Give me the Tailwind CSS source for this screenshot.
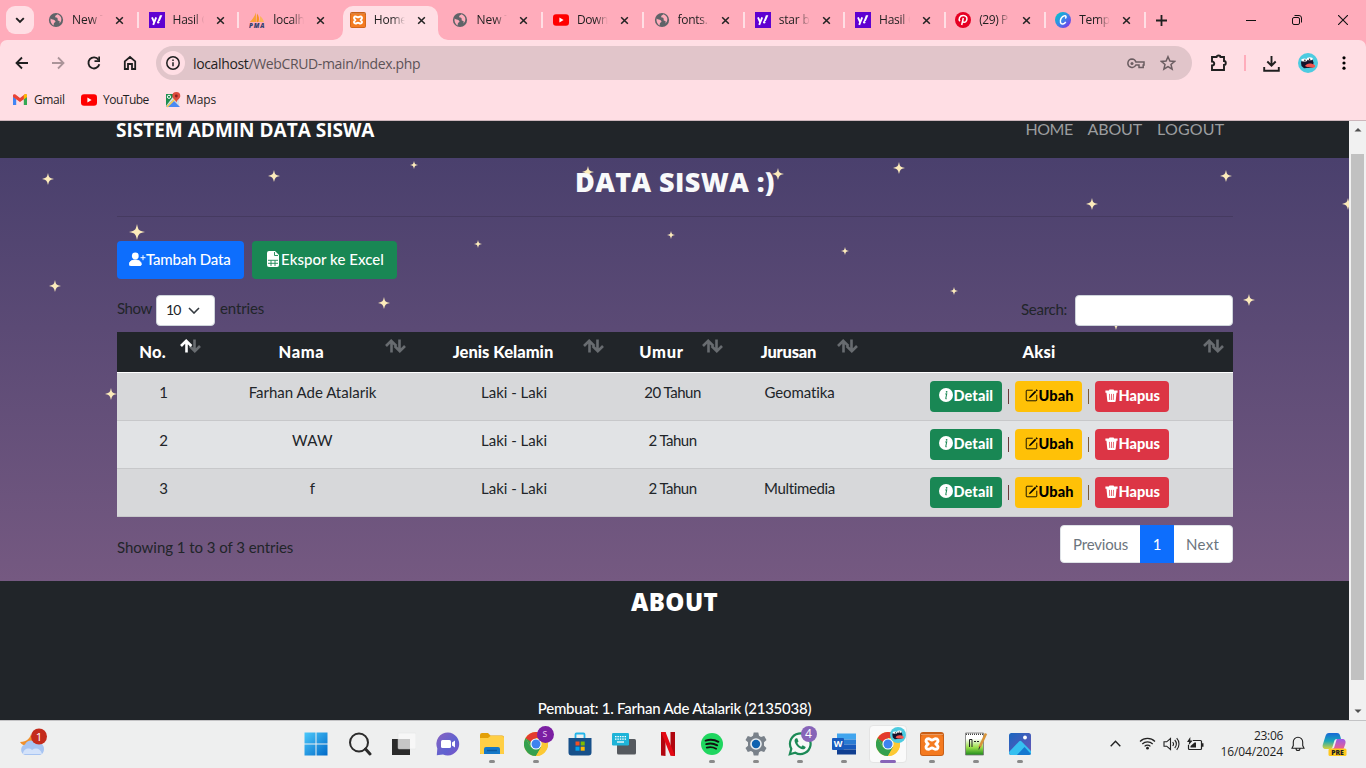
<!DOCTYPE html>
<html lang="id">
<head>
<meta charset="utf-8">
<title>Home</title>
<script src="https://cdn.jsdelivr.net/npm/@tailwindcss/browser@4"></script>
</head>
<body class="w-[1366px] h-[768px] overflow-hidden flex flex-col bg-[#ffdee4] font-['Open_Sans','Noto_Sans',sans-serif] text-[12px] text-[#1f1f1f]">

<!-- shared icon symbols -->
<svg class="hidden">
  <symbol id="x" viewBox="0 0 10 10"><path d="M1.3 1.3l7.4 7.4M8.7 1.3L1.3 8.7" stroke="#222" stroke-width="1.7" fill="none"/></symbol>
  <symbol id="globe" viewBox="0 0 16 16"><circle cx="8" cy="8" r="7.1" fill="#5f6368"/><path d="M2.6 6.6c1.5 1.6 3 .6 4 1.6s1.400 1.500 0 2.200-.4 2.500-1.200 3C3.500 12.300 2 9.500 2.600 6.600zM9.500 2.200C8 3.200 7 3.500 7.200 4.800s2 .5 2.400 1.600-.6 2 1 2.300 1.400 1.600.5 2.700c2-1 3.300-4.700 1.200-7.200-.9-1-1.800-1.600-2.800-2z" fill="#ffacbb"/></symbol>
  <symbol id="yahoo" viewBox="0 0 16 16"><path d="M0 0h16v16H0z" fill="#5f01d1"/><path d="M3 5.300l2.200 5 2-5M5.300 10.200l-1.100 2.600" stroke="#fff" stroke-width="1.900" fill="none"/><path d="M10.900 3.200h2.400L10.800 9H8.700z" fill="#fff"/><circle cx="9.200" cy="10.300" r="1.200" fill="#fff"/></symbol>
  <symbol id="pma" viewBox="0 0 16 16"><path d="M7 .5v9.500H.8C3 8 5.500 4.500 7 .5z" fill="#f9a13a"/><path d="M8 1.500C10 4 10.500 7 9.500 10H7.500z" fill="#f7931e"/><path d="M11 4c2 1.500 3.500 4 4 6h-5c1-2 1.200-4 1-6z" fill="#fbb45c"/><text x="0" y="15.700" font-size="6.200" font-weight="800" font-style="italic" font-family="Open Sans" fill="#33406e" textLength="15.500">PMA</text></symbol>
  <symbol id="xampp" viewBox="0 0 24 24"><rect width="24" height="24" rx="3" fill="#c85f17"/><rect x="1" y="3" width="22" height="20" rx="2" fill="#f47a20"/><path d="M1 2.500h22" stroke="#e99a62"/><path d="M8.300 6.700c-2.300 0-2.800 2.300-1.800 3.500L8 12l-1.500 1.800c-1 1.200-.5 3.500 1.800 3.500 1.700 0 2.200-1.300 3.700-1.300s2 1.300 3.700 1.300c2.300 0 2.800-2.300 1.800-3.500L16 12l1.500-1.800c1-1.200.5-3.500-1.800-3.500C14 6.700 13.500 8 12 8s-2-1.300-3.700-1.300z" fill="none" stroke="#fff" stroke-width="2.900"/></symbol>
  <symbol id="yt" viewBox="0 0 16 16"><rect y="2.200" width="16" height="11.600" rx="3" fill="#f00"/><path d="M6.400 5.600v4.800L10.600 8z" fill="#fff"/></symbol>
  <symbol id="chrome" viewBox="0 0 24 24"><circle cx="12" cy="12" r="12" fill="#fcc934"/><path d="M1.600 6A12 12 0 0 0 12 24l5.200-9L6.800 15z" fill="#34a04f"/><path d="M1.600 6L6.800 15 12 12V6z" fill="#34a04f"/><path d="M1.600 6A12 12 0 0 1 22.400 6H12L7 10z" fill="#e33b2e"/><path d="M22.400 6A12 12 0 0 1 12 24l5.200-9L18 9l-3-3z" fill="#fcc934"/><circle cx="12" cy="12" r="5.600" fill="#fff"/><circle cx="12" cy="12" r="4.500" fill="#3f83ee"/></symbol>
  <symbol id="avatar" viewBox="0 0 20 20"><circle cx="10" cy="10" r="10" fill="#4dcbe0"/><path d="M3 9.500L4 7l10-2 1.500 4.500-.5 5-9 .8-2.500-2.300z" fill="#15132b"/><ellipse cx="6.300" cy="7" rx="3" ry="1.500" fill="#fff"/><ellipse cx="11.800" cy="5.800" rx="3" ry="1.500" fill="#fff"/><circle cx="6.900" cy="7.300" r=".8" fill="#111"/><circle cx="11.600" cy="6.300" r=".8" fill="#111"/><path d="M7 13c1.500-3 6.500-3.500 10-.8.700 2.300-1.500 2.800-3.500 2.200-2.500-.5-4.500.3-6.500-1.400z" fill="#f4544f"/></symbol>
  <symbol id="star4" viewBox="-8 -8 16 16"><path d="M0-8Q1-2.500 2.300-2.100 3-1 8 0 3 1 2.200 2.200 1 3 0 8-1 3-2.200 2.200-3 1-8 0-3-1-2.200-2.200-1-3 0-8z" fill="#fdecbb"/></symbol>
  <symbol id="sort" viewBox="0 0 21 14"><path d="M6.500 13.500V2M1 7l5.200-5.200L11.400 7" stroke="currentColor" stroke-width="2.600" fill="none"/></symbol>
  <symbol id="sortdn" viewBox="0 0 21 14"><path d="M14.500.500V12M9.600 7l5.200 5.200L20 7" stroke="#686c70" stroke-width="2.600" fill="none"/></symbol>
  <symbol id="info" viewBox="0 0 16 16"><circle cx="8" cy="8" r="8" fill="#fff"/><path d="M7.100 6.900l1.700-.2-1 5c-.1.700.3.800 1 .4" fill="none" stroke="#198754" stroke-width="1.200"/><circle cx="8.700" cy="4.300" r="1" fill="#198754"/></symbol>
  <symbol id="edit" viewBox="0 0 16 16"><path d="M9.500 1.500h-7a1 1 0 0 0-1 1v11a1 1 0 0 0 1 1h11a1 1 0 0 0 1-1V7" fill="none" stroke="#000" stroke-width="1.100"/><path d="M14.300.3l1.500 1.500-1.200 1.300L13 1.500zM12.300 2.200l1.600 1.600-6.800 6.800-2.300.8.800-2.300z" fill="#000"/></symbol>
  <symbol id="trash" viewBox="0 0 16 16"><path d="M5.500.5h5l.7 1.200H15.500V4.500H.5V1.700h4.300zM1.800 4.500h12.400l-1 10a1.500 1.500 0 0 1-1.500 1.500H4.300a1.500 1.500 0 0 1-1.500-1.500z" fill="#fff"/><path d="M5.500 6l.3 7.500M8 6v7.500M10.500 6l-.3 7.500" stroke="#dc3545" stroke-width=".9" fill="none"/></symbol>
</svg>

<!-- tab strip -->
<header class="relative h-[40px] shrink-0 bg-[#ffacbb] flex items-center">
  <div class="ml-[6px] w-[28px] h-[28px] rounded-[9px] bg-[#ffdee4] flex items-center justify-center"><svg class="w-[10px] h-[7px]" viewBox="0 0 10 7"><path d="M1.200 1.200L5 5l3.800-3.800" fill="none" stroke="#1f1f1f" stroke-width="1.900"/></svg></div>
  <nav class="flex ml-[4px] h-full">
    <div class="w-[100.600px] flex items-center pl-[10px] relative"><svg class="size-[16px]"><use href="#globe"/></svg><span class="ml-[8px] w-[31px] overflow-hidden whitespace-nowrap mask-r-from-60%">New T</span><svg class="ml-[12px] size-[9px]"><use href="#x"/></svg><i class="absolute right-0 top-[12px] w-[2px] h-[16px] bg-[#ffdee4]"></i></div>
    <div class="w-[100.600px] flex items-center pl-[10px] relative"><svg class="size-[16px]"><use href="#yahoo"/></svg><span class="ml-[8px] w-[31px] overflow-hidden whitespace-nowrap tracking-[-.26px] mask-r-from-70%">Hasil C</span><svg class="ml-[12px] size-[9px]"><use href="#x"/></svg><i class="absolute right-0 top-[12px] w-[2px] h-[16px] bg-[#ffdee4]"></i></div>
    <div class="w-[100.600px] flex items-center pl-[10px] relative"><svg class="size-[16px]"><use href="#pma"/></svg><span class="ml-[8px] w-[31px] overflow-hidden whitespace-nowrap tracking-[-.26px] mask-r-from-60%">localh</span><svg class="ml-[12px] size-[9px]"><use href="#x"/></svg></div>
    <div class="w-[102.600px] flex items-center pl-[10px] relative">
      <svg class="absolute left-[-7px] top-[6px] w-[115px] h-[34px]" viewBox="0 0 115 34"><path d="M0 34a10 10 0 0 0 10-10V10A10 10 0 0 1 20 0H95a10 10 0 0 1 10 10V24a10 10 0 0 0 10 10z" fill="#ffdee4"/></svg>
      <svg class="relative size-[16px]"><use href="#xampp"/></svg><span class="relative ml-[8px] w-[31px] overflow-hidden whitespace-nowrap tracking-[-.23px] mask-r-from-60%">Home</span><svg class="relative ml-[12px] size-[9px]"><use href="#x"/></svg></div>
    <div class="w-[100.600px] flex items-center pl-[10px] relative"><svg class="size-[16px]"><use href="#globe"/></svg><span class="ml-[8px] w-[31px] overflow-hidden whitespace-nowrap mask-r-from-60%">New T</span><svg class="ml-[12px] size-[9px]"><use href="#x"/></svg><i class="absolute right-0 top-[12px] w-[2px] h-[16px] bg-[#ffdee4]"></i></div>
    <div class="w-[100.600px] flex items-center pl-[10px] relative"><svg class="size-[16px]"><use href="#yt"/></svg><span class="ml-[8px] w-[31px] overflow-hidden whitespace-nowrap tracking-[-.4px] mask-r-from-60%">Down</span><svg class="ml-[12px] size-[9px]"><use href="#x"/></svg><i class="absolute right-0 top-[12px] w-[2px] h-[16px] bg-[#ffdee4]"></i></div>
    <div class="w-[101.200px] flex items-center pl-[10px] relative"><svg class="size-[16px]"><use href="#globe"/></svg><span class="ml-[8px] w-[31px] overflow-hidden whitespace-nowrap tracking-[-.3px] mask-r-from-70%">fonts.</span><svg class="ml-[12px] size-[9px]"><use href="#x"/></svg><i class="absolute right-0 top-[12px] w-[2px] h-[16px] bg-[#ffdee4]"></i></div>
    <div class="w-[100.300px] flex items-center pl-[10px] relative"><svg class="size-[16px]"><use href="#yahoo"/></svg><span class="ml-[8px] w-[31px] overflow-hidden whitespace-nowrap tracking-[-.2px] mask-r-from-60%">star b</span><svg class="ml-[12px] size-[9px]"><use href="#x"/></svg><i class="absolute right-0 top-[12px] w-[2px] h-[16px] bg-[#ffdee4]"></i></div>
    <div class="w-[100.600px] flex items-center pl-[10px] relative"><svg class="size-[16px]"><use href="#yahoo"/></svg><span class="ml-[8px] w-[31px] overflow-hidden whitespace-nowrap tracking-[-.26px] mask-r-from-70%">Hasil C</span><svg class="ml-[12px] size-[9px]"><use href="#x"/></svg><i class="absolute right-0 top-[12px] w-[2px] h-[16px] bg-[#ffdee4]"></i></div>
    <div class="w-[100px] flex items-center pl-[9.500px] relative"><svg class="size-[16px]" viewBox="0 0 16 16"><circle cx="8" cy="8" r="8" fill="#e60023"/><path d="M4.900 9.300C3.200 7 4.600 3.500 8.200 3.500c3 0 4 2 3.700 3.900-.3 2.100-1.700 3.200-3 2.900-1-.2-1.300-.9-1.200-1.500M8.300 6l-1.600 7" fill="none" stroke="#fff" stroke-width="1.500"/></svg><span class="ml-[8px] w-[31px] overflow-hidden whitespace-nowrap tracking-[-.4px] mask-r-from-60%">(29) P</span><svg class="ml-[12px] size-[9px]"><use href="#x"/></svg><i class="absolute right-0 top-[12px] w-[2px] h-[16px] bg-[#ffdee4]"></i></div>
    <div class="w-[100px] flex items-center pl-[9.500px] relative"><svg class="size-[16px]" viewBox="0 0 16 16"><defs><linearGradient id="cv" x2="1" y2="1"><stop offset=".1" stop-color="#04c2cb"/><stop offset=".5" stop-color="#3b86e8"/><stop offset="1" stop-color="#8a20e8"/></linearGradient></defs><circle cx="8" cy="8" r="8" fill="url(#cv)"/><path d="M10.300 6.500c1.300-1.300.8-3-.8-2.800C6.500 4 4.700 8.300 5.500 10.500c.8 2.400 4 1.700 5.200-.7" fill="none" stroke="#fff" stroke-width="1.500"/></svg><span class="ml-[8px] w-[31px] overflow-hidden whitespace-nowrap tracking-[-.3px] mask-r-from-60%">Temp</span><svg class="ml-[12px] size-[9px]"><use href="#x"/></svg><i class="absolute right-0 top-[12px] w-[2px] h-[16px] bg-[#ffdee4]"></i></div>
  </nav>
  <svg class="ml-[10px] size-[11px]" viewBox="0 0 11 11"><path d="M5.500 0v11M0 5.500h11" stroke="#1f1f1f" stroke-width="1.800"/></svg>
  <div class="ml-auto mr-[18px] flex items-center gap-[36px]">
    <svg class="size-[10px]" viewBox="0 0 10 10"><path d="M0 5.500h10" stroke="#111"/></svg>
    <svg class="size-[10px]" viewBox="0 0 10 10"><rect x=".5" y="2.500" width="7" height="7" rx="1.500" fill="none" stroke="#111"/><path d="M2.500.5H7A2.500 2.500 0 0 1 9.500 3v4.500" fill="none" stroke="#111"/></svg>
    <svg class="size-[10px]" viewBox="0 0 10 10"><path d="M0 0l10 10M10 0L0 10" stroke="#111" stroke-width="1.100"/></svg>
  </div>
</header>

<!-- toolbar -->
<div class="h-[46px] shrink-0 flex items-center bg-[#ffacbb]"><div class="flex items-center w-full h-full rounded-t-[7px] bg-[#ffdee4]">
  <svg class="ml-[14px] size-[16px]" viewBox="0 0 16 16"><path d="M14 8H3M8 2.500L2.500 8 8 13.500" stroke="#1f1f1f" stroke-width="1.800" fill="none"/></svg>
  <svg class="ml-[20px] size-[16px]" viewBox="0 0 16 16"><path d="M2 8h11M8 2.500L13.500 8 8 13.500" stroke="#ab9499" stroke-width="1.800" fill="none"/></svg>
  <svg class="ml-[20px] size-[16px]" viewBox="0 0 16 16"><path d="M13.300 9.200A5.500 5.500 0 1 1 12.500 4.800" stroke="#1f1f1f" stroke-width="1.900" fill="none"/><path d="M14 1.500V7H8.500V5.300h3.800V1.500z" fill="#1f1f1f"/></svg>
  <svg class="ml-[20px] size-[16px]" viewBox="0 0 16 16"><path d="M2.800 14V6.300L8 2l5.200 4.300V14H10V9H6v5z" stroke="#1f1f1f" stroke-width="1.800" fill="none"/></svg>
  <div class="ml-[18px] w-[1036px] h-[34px] rounded-full bg-[#e1c5ca] flex items-center">
    <div class="ml-[5px] size-[24px] rounded-full bg-[#ffdee4] flex items-center justify-center"><svg class="size-[14px]" viewBox="0 0 14 14"><circle cx="7" cy="7" r="6.200" fill="none" stroke="#1f1f1f" stroke-width="1.500"/><path d="M7 6.200v4M7 3.600v1.500" stroke="#1f1f1f" stroke-width="1.500"/></svg></div>
    <span class="ml-[8px] text-[14px] tracking-[-.36px] text-[#5d5357]"><span class="text-[#1f1f1f]">localhost</span>/WebCRUD-main/index.php</span>
    <svg class="ml-auto w-[18px] h-[11px]" viewBox="0 0 18 11"><path d="M5 1a4.200 4.200 0 1 0 3.900 6H12v2.500h4.200V7H17V3.900H8.900A4.200 4.200 0 0 0 5 1z" fill="none" stroke="#6b5d61" stroke-width="1.500"/><circle cx="5" cy="5.400" r="1.500" fill="#6b5d61"/></svg>
    <svg class="ml-[15px] mr-[16px] size-[16px]" viewBox="0 0 16 16"><path d="M8 1.700l1.900 4.300 4.700.4-3.600 3.100 1.100 4.600L8 11.600l-4.100 2.500L5 9.500 1.400 6.400 6.100 6z" fill="none" stroke="#6b5d61" stroke-width="1.500"/></svg>
  </div>
  <svg class="ml-[18px] size-[18px]" viewBox="0 0 18 18"><path d="M2 3h4.500a2 1.500 0 0 1 4 0H14v4a1.800 2 0 0 1 0 4v5H2v-4.500c3-.2 3-4 0-4z" fill="none" stroke="#1f1f1f" stroke-width="1.900"/></svg>
  <i class="ml-[16px] w-[2px] h-[16px] bg-[#ffacbb]"></i>
  <svg class="ml-[17px] size-[17px]" viewBox="0 0 17 17"><path d="M8.500 1v9.500M4.300 6.500l4.200 4.200 4.200-4.200M1.200 12v3.700h14.600V12" stroke="#1f1f1f" stroke-width="1.900" fill="none"/></svg>
  <svg class="ml-[18px] size-[20px]"><use href="#avatar"/></svg>
  <svg class="ml-[24px] w-[4px] h-[14px]" viewBox="0 0 4 14"><circle cx="2" cy="1.800" r="1.600"/><circle cx="2" cy="7" r="1.600"/><circle cx="2" cy="12.200" r="1.600"/></svg>
</div></div>
<!-- bookmarks -->
<div class="h-[35px] shrink-0 flex items-center pb-[7px] border-b border-[#cdb6bb]">
  <svg class="ml-[13px] w-[14px] h-[11px]" viewBox="0 0 14 11"><path d="M0 1v10h3.200V5z" fill="#4285f4"/><path d="M14 1v10h-3.200V5z" fill="#34a853"/><path d="M0 1.500C0 .3 1.500-.3 2.500.5L7 4 11.500.5C12.500-.3 14 .3 14 1.500V3L7 8 0 3z" fill="#ea4335"/><path d="M10.800 1L12 .3c1-.6 2 .2 2 1.200V3l-3.200 2.500z" fill="#fbbc04"/></svg>
  <span class="ml-[7px] w-[30px] tracking-[-.4px] whitespace-nowrap">Gmail</span>
  <svg class="ml-[17px] size-[16px]"><use href="#yt"/></svg>
  <span class="ml-[6px] w-[46px] tracking-[-.5px] whitespace-nowrap">YouTube</span>
  <svg class="ml-[16px] size-[16px]" viewBox="0 0 16 16"><path d="M1 2h13v13H1z" fill="#d8dde2"/><path d="M1 2h9L1 14z" fill="#1e8e4f"/><path d="M1 15l7-7 7 7z" fill="#4a89f3"/><path d="M2 15l12-12" stroke="#fdd24a" stroke-width="1.600"/><circle cx="4" cy="4.800" r="1.600" fill="none" stroke="#fff"/><path d="M11.300 0a4 4 0 0 1 4 4c0 2.500-2.500 3-4 6.500C10 7 7.300 6.500 7.300 4a4 4 0 0 1 4-4z" fill="#dd4b3e"/><circle cx="11.300" cy="4" r="1.400" fill="#822"/></svg>
  <span class="ml-[5px] tracking-[-.13px]">Maps</span>
</div>

<!-- page viewport -->
<div class="h-[599px] shrink-0 flex overflow-hidden">
 <main class="w-[1349px] flex flex-col font-['Lato',sans-serif] text-[15px] leading-[24px] text-[#212529]">
  <div class="h-[37px] shrink-0 bg-[#212529] flex justify-between pl-[116px] pr-[124px]">
    <div class="mt-[-3px] font-['Open_Sans',sans-serif] font-bold text-[19px] text-white whitespace-nowrap">SISTEM ADMIN DATA SISWA</div>
    <div class="mt-[-4px] flex text-[16px] text-[#9b9d9f]"><span class="w-[62px] tracking-[-.5px]">HOME</span><span class="w-[69.500px] tracking-[-.14px]">ABOUT</span><span class="w-[68px] tracking-[.2px]">LOGOUT</span></div>
  </div>

  <section class="relative h-[423px] shrink-0 bg-linear-to-b from-[#4a406d] to-[#755981] px-[117px] pr-[116px] flex flex-col">
    <svg class="absolute inset-0 w-[1349px] h-[423px]" viewBox="0 158 1349 423">
      <use href="#star4" x="42" y="173" width="12" height="12"/><use href="#star4" x="268" y="170" width="12" height="12"/><use href="#star4" x="582" y="166" width="12" height="12"/><use href="#star4" x="772" y="168" width="12" height="12"/><use href="#star4" x="893" y="162" width="12" height="12"/><use href="#star4" x="1220" y="170" width="12" height="12"/><use href="#star4" x="1086" y="198" width="12" height="12"/><use href="#star4" x="1342" y="198" width="12" height="12"/><use href="#star4" x="49" y="280" width="12" height="12"/><use href="#star4" x="378" y="297" width="12" height="12"/><use href="#star4" x="1243" y="294" width="12" height="12"/><use href="#star4" x="1110" y="318" width="12" height="12"/><use href="#star4" x="105" y="388" width="12" height="12"/>
      <use href="#star4" x="129" y="224" width="16" height="16"/>
      <use href="#star4" x="410" y="161" width="8" height="8"/><use href="#star4" x="474" y="240" width="8" height="8"/><use href="#star4" x="667" y="231" width="8" height="8"/><use href="#star4" x="841" y="247" width="8" height="8"/><use href="#star4" x="950" y="287" width="8" height="8"/>
    </svg>
    <h1 class="relative h-[58px] pt-[7px] text-center font-['Open_Sans',sans-serif] font-extrabold text-[27px] leading-[34px] tracking-[.4px] text-[#f8f9fa]">DATA SISWA :)</h1>
    <hr class="relative border-0 h-px bg-[#453a60]">
    <div class="relative mt-[24px] flex gap-[8px] text-white">
      <div class="w-[127px] h-[38px] rounded-[4px] bg-[#0d6efd] flex items-center pb-[2px] pl-[12px] font-medium"><svg class="w-[17px] h-[14px]" viewBox="0 0 17 14"><circle cx="6.300" cy="4" r="3.400" fill="#fff"/><path d="M.3 12.500c0-3 2.500-4.400 6-4.400s6 1.400 6 4.400c0 .6-.4 1-1 1h-10c-.6 0-1-.4-1-1zM14 3.200v5M11.500 5.700h5" fill="#fff" stroke="#fff" stroke-width="1"/></svg><span class="tracking-[-.2px] whitespace-nowrap">Tambah Data</span></div>
      <div class="w-[145px] h-[38px] rounded-[4px] bg-[#198754] flex items-center pb-[2px] pl-[15px] font-medium"><svg class="w-[12px] h-[16px] mr-[2px]" viewBox="0 0 12 16"><path d="M2 0h6l4 4v10a2 2 0 0 1-2 2H2a2 2 0 0 1-2-2V2a2 2 0 0 1 2-2z" fill="#fff"/><path d="M7.500 1v3.500H11M1 9.300h10M1 12.300h10M4 9.500v5.500M8 9.500v5.500" stroke="#198754" stroke-width=".9" fill="none"/></svg><span class="tracking-[.05px] whitespace-nowrap">Ekspor ke Excel</span></div>
    </div>
    <div class="relative mt-[16px] h-[31px] flex items-center justify-between">
      <div class="flex items-center"><span class="w-[39px] tracking-[-.4px] mt-[-5px]">Show</span><span class="w-[59px] h-[31px] rounded-[4px] border border-[#ced4da] bg-white flex items-center justify-between pl-[9px] pr-[14px] text-[14px]"><span class="tracking-[-.9px] mt-[-2px]">10</span><svg class="w-[12px] h-[7px]" viewBox="0 0 12 7"><path d="M1 1l5 5 5-5" fill="none" stroke="#343a40" stroke-width="1.600"/></svg></span><span class="ml-[5px] tracking-[-.14px] mt-[-5px]">entries</span></div>
      <div class="flex items-center"><span class="w-[54px] tracking-[-.27px] mt-[-3px]">Search:</span><span class="w-[158px] h-[31px] rounded-[4px] border border-[#ced4da] bg-white"></span></div>
    </div>

    <table class="relative mt-[6px] w-[1116px] table-fixed border-separate border-spacing-0 text-center">
      <colgroup><col class="w-[93px]"><col class="w-[205px]"><col class="w-[198px]"><col class="w-[119px]"><col class="w-[135px]"><col class="w-[366px]"></colgroup>
      <thead><tr class="h-[41px] bg-[#212529] text-[16.500px] text-white">
        <th class="relative border-b border-white p-0 pb-px pl-[8px] pr-[30px] font-black tracking-[.2px]">No.<svg class="absolute right-[9px] top-[7px] w-[21px] h-[14px] text-white"><use href="#sortdn"/><use href="#sort"/></svg></th>
        <th class="relative border-b border-white p-0 pb-px pl-[8px] pr-[30px] font-black tracking-[.6px]">Nama<svg class="absolute right-[9px] top-[7px] w-[21px] h-[14px] text-[#686c70]"><use href="#sort"/><use href="#sortdn"/></svg></th>
        <th class="relative border-b border-white p-0 pb-px pl-[8px] pr-[30px] font-black">Jenis Kelamin<svg class="absolute right-[9px] top-[7px] w-[21px] h-[14px] text-[#686c70]"><use href="#sort"/><use href="#sortdn"/></svg></th>
        <th class="relative border-b border-white p-0 pb-px pl-[8px] pr-[30px] font-black tracking-[.7px]">Umur<svg class="absolute right-[9px] top-[7px] w-[21px] h-[14px] text-[#686c70]"><use href="#sort"/><use href="#sortdn"/></svg></th>
        <th class="relative border-b border-white p-0 pb-px pl-[8px] pr-[30px] font-black tracking-[-.2px]">Jurusan<svg class="absolute right-[9px] top-[7px] w-[21px] h-[14px] text-[#686c70]"><use href="#sort"/><use href="#sortdn"/></svg></th>
        <th class="relative border-b border-white p-0 pb-px pl-[8px] pr-[30px] font-black tracking-[.2px]">Aksi<svg class="absolute right-[9px] top-[7px] w-[21px] h-[14px] text-[#686c70]"><use href="#sort"/><use href="#sortdn"/></svg></th>
      </tr></thead>
      <tbody class="[&_td]:h-[48px] [&_td]:border-b [&_td]:border-[#c7c8ca] [&_td]:p-0 [&_td]:pt-[7px] [&_td]:align-top">
        <tr class="bg-[#d7d8da]"><td>1</td><td>Farhan Ade Atalarik</td><td>Laki - Laki</td><td class="tracking-[-.48px]">20 Tahun</td><td class="tracking-[-.1px]">Geomatika</td>
          <td><div class="mt-px pr-[2px] flex justify-center items-center text-[14.500px] font-black text-white"><span class="w-[72px] h-[31px] rounded-[4px] bg-[#198754] flex items-center pb-px pl-[9px] tracking-[.1px]"><svg class="size-[14px] mr-[1px] mt-[-2px]"><use href="#info"/></svg>Detail</span><i class="mx-[6px] w-px h-[15px] bg-[#6b3a3a]"></i><span class="w-[67px] h-[31px] rounded-[4px] bg-[#ffc107] text-black flex items-center pb-px pl-[10px] tracking-[.1px]"><svg class="size-[13px] mr-[1px] mt-[-2px]"><use href="#edit"/></svg>Ubah</span><i class="mx-[6px] w-px h-[15px] bg-[#7a5a3a]"></i><span class="w-[74px] h-[31px] rounded-[4px] bg-[#dc3545] flex items-center pb-px pl-[10px]"><svg class="size-[13px] mr-[1px] mt-[-2px]"><use href="#trash"/></svg>Hapus</span></div></td></tr>
        <tr class="bg-[#e1e3e5]"><td>2</td><td class="tracking-[.3px]">WAW</td><td>Laki - Laki</td><td class="tracking-[-.53px]">2 Tahun</td><td></td>
          <td><div class="mt-px pr-[2px] flex justify-center items-center text-[14.500px] font-black text-white"><span class="w-[72px] h-[31px] rounded-[4px] bg-[#198754] flex items-center pb-px pl-[9px] tracking-[.1px]"><svg class="size-[14px] mr-[1px] mt-[-2px]"><use href="#info"/></svg>Detail</span><i class="mx-[6px] w-px h-[15px] bg-[#6b3a3a]"></i><span class="w-[67px] h-[31px] rounded-[4px] bg-[#ffc107] text-black flex items-center pb-px pl-[10px] tracking-[.1px]"><svg class="size-[13px] mr-[1px] mt-[-2px]"><use href="#edit"/></svg>Ubah</span><i class="mx-[6px] w-px h-[15px] bg-[#7a5a3a]"></i><span class="w-[74px] h-[31px] rounded-[4px] bg-[#dc3545] flex items-center pb-px pl-[10px]"><svg class="size-[13px] mr-[1px] mt-[-2px]"><use href="#trash"/></svg>Hapus</span></div></td></tr>
        <tr class="bg-[#d7d8da]"><td>3</td><td>f</td><td>Laki - Laki</td><td class="tracking-[-.53px]">2 Tahun</td><td class="tracking-[-.36px]">Multimedia</td>
          <td><div class="mt-px pr-[2px] flex justify-center items-center text-[14.500px] font-black text-white"><span class="w-[72px] h-[31px] rounded-[4px] bg-[#198754] flex items-center pb-px pl-[9px] tracking-[.1px]"><svg class="size-[14px] mr-[1px] mt-[-2px]"><use href="#info"/></svg>Detail</span><i class="mx-[6px] w-px h-[15px] bg-[#6b3a3a]"></i><span class="w-[67px] h-[31px] rounded-[4px] bg-[#ffc107] text-black flex items-center pb-px pl-[10px] tracking-[.1px]"><svg class="size-[13px] mr-[1px] mt-[-2px]"><use href="#edit"/></svg>Ubah</span><i class="mx-[6px] w-px h-[15px] bg-[#7a5a3a]"></i><span class="w-[74px] h-[31px] rounded-[4px] bg-[#dc3545] flex items-center pb-px pl-[10px]"><svg class="size-[13px] mr-[1px] mt-[-2px]"><use href="#trash"/></svg>Hapus</span></div></td></tr>
      </tbody>
    </table>
    <div class="relative mt-[8px] flex justify-between">
      <span class="mt-[10px] tracking-[-.05px]">Showing 1 to 3 of 3 entries</span>
      <div class="flex w-[173px] h-[38px] rounded-[4px] border border-[#dee2e6] bg-white text-[#6c757d]"><span class="w-[79px] flex items-center pb-px pl-[12px] tracking-[-.18px]">Previous</span><span class="w-[34px] my-[-1px] bg-[#0d6efd] text-white flex items-center pb-px justify-center">1</span><span class="flex items-center pb-px pl-[12px] tracking-[.3px]">Next</span></div>
    </div>
  </section>

  <footer class="grow bg-[#212529] flex flex-col items-center text-white">
    <h2 class="mt-[4px] h-[34px] leading-[34px] font-['Open_Sans',sans-serif] font-extrabold text-[24px] tracking-[.4px]">ABOUT</h2>
    <p class="mt-[77px] font-medium tracking-[-.24px]">Pembuat: 1. Farhan Ade Atalarik (2135038)</p>
  </footer>
 </main>
 <aside class="w-[17px] bg-[#f1f1f1] flex flex-col items-center">
   <svg class="mt-[6px] w-[8px] h-[5px]" viewBox="0 0 8 5"><path d="M.5 4.500L4 1l3.500 3.500z" fill="#505050"/></svg>
   <div class="mt-[22px] w-[13px] h-[526px] bg-[#c1c1c1]"></div>
   <svg class="mt-[29px] w-[8px] h-[5px]" viewBox="0 0 8 5"><path d="M.5.500L4 4 7.500.500z" fill="#505050"/></svg>
 </aside>
</div>

<!-- taskbar -->
<footer class="h-[48px] shrink-0 border-t border-[#c3c3c5] bg-[#eeefef] flex items-center">
  <div class="w-[293.500px] pl-[19px] pb-[4px]">
    <svg class="w-[30px] h-[30px]" viewBox="0 0 30 30"><path d="M12 6c-1 4-4 8-11 8 3 5 10 5 14 0z" fill="#f0902c"/><path d="M6 27a5.500 5.500 0 0 1 0-10.500c2-5 9-5 11-1 4-2 8 1 8 5.500s-3 6-5 6z" fill="#a7c4f2"/><path d="M4 26c0-5 6-7 9-4 4-3 9-1 10 4z" fill="#d3e2fa"/><circle cx="20" cy="8.500" r="8" fill="#c42b1c"/><text x="20" y="12.600" text-anchor="middle" font-size="11.500" font-family="Open Sans" fill="#fff">1</text></svg>
  </div>
  <div class="flex h-full pb-[2px]">
    <div class="w-[44px] flex justify-center items-center"><svg class="size-[24px]" viewBox="0 0 24 24"><defs><linearGradient id="w" x2="1" y2="1"><stop stop-color="#4cc9fb"/><stop offset="1" stop-color="#0069c8"/></linearGradient></defs><path d="M.5.500h11v11H.5zM12.500.500h11v11h-11zM.5 12.500h11v11H.5zM12.500 12.500h11v11h-11z" fill="url(#w)"/></svg></div>
    <div class="w-[44px] flex justify-center items-center"><svg class="size-[24px]" viewBox="0 0 24 24"><circle cx="11" cy="10.500" r="9" fill="none" stroke="#2b2b2b" stroke-width="2"/><path d="M17.500 17l4.500 5" stroke="#2b2b2b" stroke-width="3" stroke-linecap="round"/></svg></div>
    <div class="w-[44px] flex justify-center items-center"><svg class="size-[24px]" viewBox="0 0 24 24"><rect x="0" y="7" width="18" height="16" fill="#2b2b2b"/><rect x="6" y="1" width="18" height="16" rx="1" fill="#fafafa" opacity=".75" stroke="#ddd" stroke-width=".5"/></svg></div>
    <div class="w-[44px] flex justify-center items-center"><svg class="size-[24px]" viewBox="0 0 24 24"><defs><linearGradient id="tm" x2="1" y2="1"><stop stop-color="#8a63c0"/><stop offset=".6" stop-color="#5f62d0"/><stop offset="1" stop-color="#7d52c8"/></linearGradient></defs><path d="M12 .5A11.500 11.500 0 1 1 7 22.500L.8 23.300 1.300 16.500A11.500 11.500 0 0 1 12 .5z" fill="url(#tm)"/><rect x="5" y="8" width="10" height="8" rx="1.500" fill="#fff"/><path d="M16 10.500l3-2v7l-3-2z" fill="#fff"/></svg></div>
    <div class="relative w-[44px] flex justify-center items-center"><svg class="size-[24px]" viewBox="0 0 24 24"><path d="M0 3a2 2 0 0 1 2-2h6l2.500 2.500H22a2 2 0 0 1 2 2V21a1 1 0 0 1-1 1H0z" fill="#e3a008"/><path d="M0 6h8l2.500-2H22a2 2 0 0 1 2 2v15a1 1 0 0 1-1 1H1a1 1 0 0 1-1-1z" fill="#ffcf45"/><path d="M4 22v-5a2 2 0 0 1 2-2h12a2 2 0 0 1 2 2v5z" fill="#1478c8"/><path d="M7 18.500h10" stroke="#0c5aa0" stroke-width="1.500"/></svg><i class="absolute bottom-[3px] w-[6px] h-[3px] rounded-full bg-[#8a8a8a]"></i></div>
    <div class="relative w-[44px] flex justify-center items-center"><svg class="size-[24px]"><use href="#chrome"/></svg><span class="absolute left-[23px] top-[5px] size-[17px] rounded-full bg-[#7b1fa2] text-[10px] leading-[15px] text-center text-[#e8c9f2]">s</span><i class="absolute bottom-[3px] w-[6px] h-[3px] rounded-full bg-[#8a8a8a]"></i></div>
    <div class="w-[44px] flex justify-center items-center"><svg class="size-[24px]" viewBox="0 0 24 24"><path d="M7.500 6V2.500a1 1 0 0 1 1-1h7a1 1 0 0 1 1 1V6" fill="none" stroke="#22b5ea" stroke-width="1.800"/><path d="M.5 6h23v14.500a3 3 0 0 1-3 3h-17a3 3 0 0 1-3-3z" fill="#17508a"/><path d="M7.500 9.500h4v4h-4z" fill="#f25022"/><path d="M12.700 9.500h4v4h-4z" fill="#7fba00"/><path d="M7.500 14.700h4v4h-4z" fill="#00a4ef"/><path d="M12.700 14.700h4v4h-4z" fill="#ffb900"/></svg></div>
    <div class="w-[44px] flex justify-center items-center"><svg class="size-[24px]" viewBox="0 0 24 24"><rect x="5" y="7" width="19" height="15.500" rx="1.500" fill="#55595e"/><rect y="1" width="17" height="12.500" rx="1.200" fill="#1fb4d8"/><path d="M3 4.700h11M3 7.200h11" stroke="#fff" stroke-width="1.300" stroke-dasharray="1.500 .9"/><path d="M5 10h7" stroke="#fff" stroke-width="1.300"/></svg></div>
    <div class="w-[44px] flex justify-center items-center"><svg class="size-[24px]" viewBox="0 0 24 24"><path d="M5 0h4.500v24L5 23.500zM14.500 0H19v24l-4.500-.5z" fill="#b1060f"/><path d="M5 0h4.500L19 24l-4.500-.5z" fill="#e50914"/></svg></div>
    <div class="relative w-[44px] flex justify-center items-center"><svg class="size-[22px]" viewBox="0 0 24 24"><circle cx="12" cy="12" r="12" fill="#1fd65f"/><path d="M5 8.300c4.500-1.400 10-1 14 1.400M5.700 12.200c4-1.200 8.500-.7 12 1.300M6.300 15.900c3.400-.9 7-.6 10.200 1.200" fill="none" stroke="#111" stroke-width="2" stroke-linecap="round"/></svg><i class="absolute bottom-[3px] w-[6px] h-[3px] rounded-full bg-[#8a8a8a]"></i></div>
    <div class="relative w-[44px] flex justify-center items-center"><svg class="size-[24px]" viewBox="0 0 24 24"><path d="M9.700.500h4.600l.7 3.300 2 1.100 3.200-1 2.300 4-2.500 2.300v3.600l2.500 2.300-2.300 4-3.200-1-2 1.100-.7 3.300H9.700L9 20.200l-2-1.100-3.200 1-2.300-4L4 13.800v-3.600L1.500 7.900l2.300-4 3.200 1 2-1.100z" fill="#79818a"/><circle cx="12" cy="12" r="5.800" fill="#e9edf0"/><circle cx="12" cy="12" r="4.200" fill="#0f62b0"/></svg><i class="absolute bottom-[3px] w-[6px] h-[3px] rounded-full bg-[#8a8a8a]"></i></div>
    <div class="relative w-[44px] flex justify-center items-center"><svg class="size-[24px]" viewBox="0 0 24 24"><path d="M1.800 22.300l1.500-5.500a10.300 10.300 0 1 1 4 4z" fill="#f5f8f6" stroke="#1b8a56" stroke-width="2.200"/><path d="M8.300 6.300c-1 .2-2 1.400-1.700 3 .6 3.500 4.500 7.500 8 8 1.500.2 3-.8 3.100-2.300l-3-1.700-1.400 1.400c-1.800-.7-3.200-2-4-3.900l1.200-1.300-1-2.800c-.2-.4-.7-.5-1.200-.4z" fill="#1b8a56"/></svg><span class="absolute left-[23px] top-[5px] size-[16px] rounded-full bg-[#8764b8] text-[12px] leading-[16px] text-center text-white">4</span><i class="absolute bottom-[3px] w-[6px] h-[3px] rounded-full bg-[#8a8a8a]"></i></div>
    <div class="relative w-[44px] flex justify-center items-center"><svg class="size-[24px]" viewBox="0 0 24 24"><path d="M5 1.500h19v6H5z" fill="#41a5ee"/><path d="M5 7.500h19v5H5z" fill="#2b7cd3"/><path d="M5 12.500h19v5H5z" fill="#185abd"/><path d="M5 17.500h19v5H5z" fill="#103f91"/><rect x="0" y="6" width="12" height="12" rx="1" fill="#185abd"/><text x="6" y="15.300" text-anchor="middle" font-family="Open Sans" font-weight="700" font-size="9" fill="#fff">W</text></svg><i class="absolute bottom-[3px] w-[6px] h-[3px] rounded-full bg-[#8a8a8a]"></i></div>
    <div class="relative w-[44px] flex justify-center items-center"><span class="absolute left-[3px] top-[4px] w-[38px] h-[38px] rounded-[4px] bg-[#fafafa] border border-[#e4e4e4]"></span><svg class="relative size-[24px]"><use href="#chrome"/></svg><svg class="absolute left-[24px] top-[6px] size-[16px]"><use href="#avatar"/></svg><i class="absolute bottom-[3px] w-[16px] h-[3px] rounded-full bg-[#8764b8]"></i></div>
    <div class="relative w-[44px] flex justify-center items-center"><svg class="size-[24px]"><use href="#xampp"/></svg><i class="absolute bottom-[3px] w-[6px] h-[3px] rounded-full bg-[#8a8a8a]"></i></div>
    <div class="relative w-[44px] flex justify-center items-center"><svg class="size-[24px]" viewBox="0 0 24 24"><defs><linearGradient id="np" x2="0" y2="1"><stop offset=".25" stop-color="#fff"/><stop offset=".65" stop-color="#9be04a"/><stop offset="1" stop-color="#1c8a1c"/></linearGradient></defs><path d="M1.500 1h18v22h-18z" fill="url(#np)" stroke="#777" stroke-width=".8"/><path d="M2 2.200h17" stroke="#444" stroke-width="1.600" stroke-dasharray="1 1"/><path d="M5.500 15V7.500h2.500V15M10 9.500h2M13 9.500h2" stroke="#222" stroke-width="1" fill="none"/><path d="M22 1.500l-6.500 14" stroke="#d8943a" stroke-width="2.600"/><path d="M15.800 14.500l-1 3" stroke="#333" stroke-width="1"/></svg><i class="absolute bottom-[3px] w-[6px] h-[3px] rounded-full bg-[#8a8a8a]"></i></div>
    <div class="relative w-[44px] flex justify-center items-center"><svg class="size-[24px]" viewBox="0 0 24 24"><defs><linearGradient id="ph" x2="1" y2="1"><stop stop-color="#1a66c0"/><stop offset="1" stop-color="#6a55b5"/></linearGradient><clipPath id="pc"><rect x="1" y="1" width="22" height="22" rx="2.500"/></clipPath></defs><g clip-path="url(#pc)"><rect x="1" y="1" width="22" height="22" fill="url(#ph)"/><path d="M1 20L11 9.500a1.800 1.800 0 0 1 2.600 0L24 20v4H1z" fill="#35c0f0"/><path d="M8 24l8.500-9L25 24z" fill="#1478d0"/></g><circle cx="17" cy="5.500" r="1.900" fill="#fff"/></svg><i class="absolute bottom-[3px] w-[6px] h-[3px] rounded-full bg-[#8a8a8a]"></i></div>
  </div>
  <div class="ml-auto flex items-center pr-[19px] pb-[2px]">
    <svg class="w-[11px] h-[7px]" viewBox="0 0 11 7"><path d="M.7 6.200L5.500 1.200l4.800 5" fill="none" stroke="#222" stroke-width="1.400"/></svg>
    <svg class="ml-[18px] w-[17px] h-[13px]" viewBox="0 0 17 13"><path d="M1 4.500a10.600 10.600 0 0 1 15 0M3.300 7a7.400 7.400 0 0 1 10.400 0M5.600 9.400a4.100 4.100 0 0 1 5.800 0" fill="none" stroke="#222" stroke-width="1.200"/><circle cx="8.500" cy="11.200" r="1.400" fill="#222"/></svg>
    <svg class="ml-[7px] w-[17px] h-[14px]" viewBox="0 0 17 14"><path d="M1 4.800h2.700L7.500 1.500v11L3.700 9.200H1z" fill="none" stroke="#222" stroke-width="1.100"/><path d="M9.700 5a3 3 0 0 1 0 4M11.700 3a5.600 5.600 0 0 1 0 8M13.700 1.200a8.500 8.500 0 0 1 0 11.600" fill="none" stroke="#222" stroke-width="1.100"/></svg>
    <svg class="ml-[7px] w-[17px] h-[14px]" viewBox="0 0 17 14"><path d="M6 3.500h7.500a1 1 0 0 1 1 1v7a1 1 0 0 1-1 1H2.500a1 1 0 0 1-1-1V8" fill="none" stroke="#222" stroke-width="1.200"/><path d="M7.500 5.500h1.500v5H3.500V9zM15 6.300h1.500v3.500H15zM3.300 0L0 5h2.200L1.500 8.300 5.800 3.500H3.300z" fill="#222"/></svg>
    <div class="ml-[16px] w-[63px] text-right leading-[16px] text-[12px]"><div class="tracking-[-.32px]">23:06</div><div class="tracking-[-.12px] whitespace-nowrap">16/04/2024</div></div>
    <svg class="ml-[8px] w-[14px] h-[16px]" viewBox="0 0 14 16"><path d="M1 12.200l1.300-2.700V6a4.700 4.700 0 0 1 9.400 0v3.500l1.300 2.700zM5 12.500a2 2 0 0 0 4 0" fill="none" stroke="#222" stroke-width="1.100"/></svg>
    <svg class="ml-[17px] w-[25px] h-[24px]" viewBox="0 0 25 24"><defs><linearGradient id="c1" x2="0" y2="1"><stop stop-color="#1768d8"/><stop offset=".5" stop-color="#19a7b8"/><stop offset="1" stop-color="#d8d23a"/></linearGradient><linearGradient id="c2" x2="0" y2="1"><stop stop-color="#9a5be8"/><stop offset="1" stop-color="#ee5f8a"/></linearGradient></defs><path d="M7 1h8c2 0 2.700 1 3.200 3l.8 3h-4c-2 0-2.500 1-3 3l-1.500 5c-.5 1.500-1 2-2.500 2H4c-3 0-4-2-3-5l2.500-8C4.200 2 5 1 7 1z" fill="url(#c1)"/><path d="M15 7h5c3 0 4.200 2 3.300 5l-1.800 5H10c1.500 0 2-1 2.500-2.500l1.500-5C14.500 7.500 15 7 15 7z" fill="url(#c2)"/><rect x="6.500" y="16.500" width="18" height="7.500" rx="1.500" fill="#ffc81e"/><text x="15.500" y="22.800" text-anchor="middle" font-size="6.800" font-weight="800" font-family="Open Sans" fill="#222">PRE</text></svg>
  </div>
</footer>
</body>
</html>
